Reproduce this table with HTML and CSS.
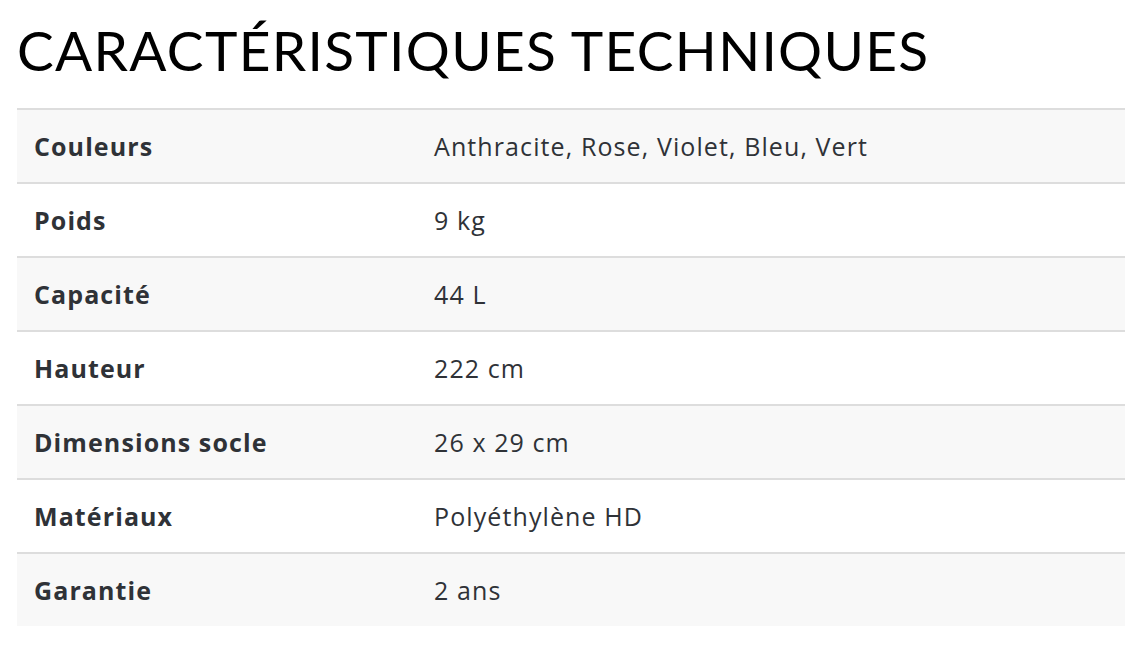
FILE: index.html
```html
<!DOCTYPE html>
<html lang="fr">
<head>
<meta charset="utf-8">
<title>Caractéristiques techniques</title>
<link rel="stylesheet" href="styles.css">
</head>
<body>
<section class="specs">
  <h2 class="specs-title">CARACTÉRISTIQUES TECHNIQUES</h2>
  <table class="specs-table">
    <tbody>
      <tr><th>Couleurs</th><td>Anthracite, Rose, Violet, Bleu, Vert</td></tr>
      <tr><th>Poids</th><td>9 kg</td></tr>
      <tr><th>Capacité</th><td>44 L</td></tr>
      <tr><th>Hauteur</th><td>222 cm</td></tr>
      <tr><th>Dimensions socle</th><td>26 x 29 cm</td></tr>
      <tr><th>Matériaux</th><td>Polyéthylène HD</td></tr>
      <tr><th>Garantie</th><td>2 ans</td></tr>
    </tbody>
  </table>
</section>
</body>
</html>
```
FILE: styles.css
```css
html, body {
  margin: 0;
  padding: 0;
  background: #fff;
}
body {
  font-family: "Open Sans", "Lato", sans-serif;
  color: #2f3237;
}
.specs {
  padding: 0 13px 0 17px;
}
.specs-title {
  margin: 0;
  padding-top: 20px;
  height: 108px;
  box-sizing: border-box;
  font-family: "Lato", sans-serif;
  font-size: 55px;
  line-height: 60px;
  font-weight: 400;
  color: #000;
  letter-spacing: 1.3px;
}
.specs-table {
  width: 100%;
  border-collapse: collapse;
  font-size: 25px;
  letter-spacing: 1.1px;
}
.specs-table th,
.specs-table td {
  text-align: left;
  padding: 0 17px;
  height: 72px;
  border-top: 2px solid #dddddd;
  vertical-align: middle;
}
.specs-table th {
  width: 366px;
  font-weight: 700;
  color: #2f3237;
}
.specs-table td {
  font-weight: 400;
  color: #2f3237;
}
.specs-table tr:nth-child(odd) {
  background: #f8f8f8;
}
```
